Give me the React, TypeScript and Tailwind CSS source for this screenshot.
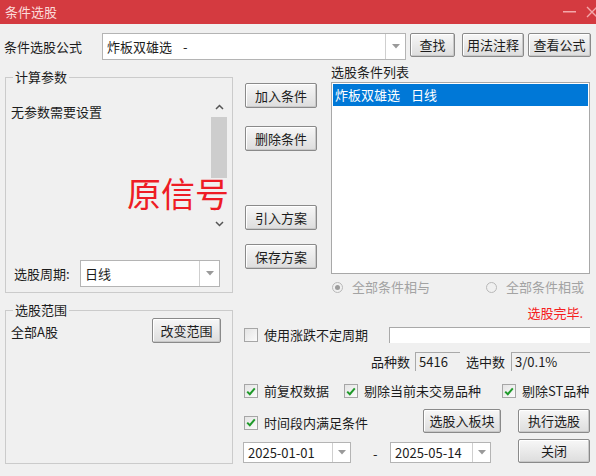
import type { ReactNode } from 'react';

function Btn({ children, className = '' }: { children: ReactNode; className?: string }) {
  return (
    <div
      className={`flex h-[24px] items-center justify-center rounded-[2px] border border-[#8a8a8a] bg-gradient-to-b from-[#f7f7f7] to-[#dddddd] shadow-[inset_-1px_-1px_0_#c8c8c8,inset_1px_1px_0_#ffffff] ${className}`}
    >
      {children}
    </div>
  );
}

function Arrow() {
  return (
    <svg width="8" height="5" viewBox="0 0 8 5">
      <path d="M0 0h8L4 4.5z" fill="#9a9a9a" />
    </svg>
  );
}

function Combo({
  children,
  className = '',
  drop = 'w-[20px]',
}: {
  children: ReactNode;
  className?: string;
  drop?: string;
}) {
  return (
    <div className={`flex border border-[#b4b4b4] bg-white ${className}`}>
      <div className="flex flex-1 items-center pl-[4px]">{children}</div>
      <div className={`flex items-center justify-center border-l border-[#cfcfcf] ${drop}`}>
        <Arrow />
      </div>
    </div>
  );
}

function Check({ checked, label, className = '' }: { checked: boolean; label: string; className?: string }) {
  return (
    <div className={`flex items-center ${className}`}>
      <div className="flex h-[14px] w-[14px] items-center justify-center border border-[#a6a6a6] bg-gradient-to-br from-[#e4e4e4] to-[#fbfbfb]">
        {checked ? (
          <svg width="10" height="9" viewBox="0 0 10 9">
            <path d="M1.2 4.6 3.8 7.2 8.8 1.4" fill="none" stroke="#1f9a2a" strokeWidth="2" />
          </svg>
        ) : null}
      </div>
      <span className="ml-[6px] whitespace-nowrap">{label}</span>
    </div>
  );
}

function Radio({ checked, label, className = '' }: { checked: boolean; label: string; className?: string }) {
  return (
    <div className={`flex items-center text-[#a3a3a3] ${className}`}>
      <div className="flex h-[11px] w-[11px] items-center justify-center rounded-full border border-[#b9b9b9]">
        {checked ? <div className="h-[5px] w-[5px] rounded-full bg-[#9c9c9c]" /> : null}
      </div>
      <span className="ml-[9px]">{label}</span>
    </div>
  );
}

function Group({ title, className = '', children }: { title: string; className?: string; children: ReactNode }) {
  return (
    <div className={`relative border border-[#cbcbcb] ${className}`}>
      <span className="absolute -top-[10px] left-[7px] bg-[#f0f0f0] px-[2px] leading-[18px]">{title}</span>
      {children}
    </div>
  );
}

export default function App() {
  return (
    <div className="h-[476px] w-[596px] overflow-hidden bg-[#f0f0f0] font-['Noto_Sans_CJK_SC',sans-serif] text-[13px] leading-[18px] text-[#1c1c1c]">
      {/* title bar */}
      <div className="flex h-[24px] items-center bg-[#d43a40] pl-[5px] text-[#fbdada]">
        <span>条件选股</span>
        <div className="ml-auto flex items-center">
          <svg width="13" height="2" viewBox="0 0 13 2" className="mr-[10px]">
            <rect width="13" height="1.5" fill="#f3a8aa" />
          </svg>
          <svg width="12" height="12" viewBox="0 0 12 12" className="-mr-[2px]">
            <path d="M1 1l10 10M11 1 1 11" stroke="#f3a8aa" strokeWidth="1.4" />
          </svg>
        </div>
      </div>

      {/* formula row */}
      <div className="mt-[9px] flex items-start pl-[4px]">
        <div className="flex h-[27px] w-[98px] items-center">条件选股公式</div>
        <Combo className="h-[27px] w-[304px]">
          <span>炸板双雄选</span>
          <span className="ml-[11px]">-</span>
        </Combo>
        <Btn className="ml-[4px] w-[45px]">查找</Btn>
        <Btn className="ml-[7px] w-[62px]">用法注释</Btn>
        <Btn className="ml-[4px] w-[63px]">查看公式</Btn>
      </div>

      <div className="flex">
        {/* left column */}
        <div className="ml-[5px] w-[228px]">
          <Group title="计算参数" className="mt-[17px] h-[216px]">
            <div className="flex pt-[20px]">
              <div className="flex-1 pl-[5px] pt-[5px]">无参数需要设置</div>
              <div className="mr-[5px] flex h-[134px] w-[16px] flex-col items-center">
                <div className="flex h-[17px] items-center">
                  <svg width="9" height="6" viewBox="0 0 9 6">
                    <path d="M1 5 4.5 1.5 8 5" fill="none" stroke="#555" strokeWidth="1.5" />
                  </svg>
                </div>
                <div className="mt-[2px] h-[61px] w-[16px] bg-[#cdcdcd]" />
                <div className="mt-auto flex h-[17px] items-center">
                  <svg width="9" height="6" viewBox="0 0 9 6">
                    <path d="M1 1 4.5 4.5 8 1" fill="none" stroke="#555" strokeWidth="1.5" />
                  </svg>
                </div>
              </div>
            </div>
            <span className="absolute left-[121px] top-[97px] whitespace-nowrap text-[34px] leading-[36px] text-[#ee1c25]">
              原信号
            </span>
            <div className="mt-[28px] flex items-center pl-[8px]">
              <span className="w-[66px]">选股周期:</span>
              <Combo className="h-[27px] w-[140px]">日线</Combo>
            </div>
          </Group>

          <Group title="选股范围" className="mt-[17px] h-[154px]">
            <div className="flex items-center justify-between pl-[5px] pr-[11px] pt-[7px]">
              <span className="mt-[2px]">全部A股</span>
              <Btn className="h-[25px] w-[69px]">改变范围</Btn>
            </div>
          </Group>
        </div>

        {/* right column */}
        <div className="ml-[10px] w-[347px]">
          <div className="flex">
            <div className="ml-[2px] flex w-[72px] flex-col">
              <Btn className="mt-[23px] h-[25px]">加入条件</Btn>
              <Btn className="mt-[18px] h-[25px]">删除条件</Btn>
              <Btn className="mt-[54px] h-[25px]">引入方案</Btn>
              <Btn className="mt-[14px] h-[25px]">保存方案</Btn>
            </div>
            <div className="ml-[14px] w-[259px]">
              <div className="mt-[3px]">选股条件列表</div>
              <div className="mt-[1px] h-[192px] border border-[#a8a8a8] bg-white p-[1px]">
                <div className="flex h-[22px] items-center bg-[#0078d7] pl-[2px] text-white">
                  <span>炸板双雄选</span>
                  <span className="ml-[11px]">日线</span>
                </div>
              </div>
              <div className="mt-[5px] flex h-[16px] items-center">
                <Radio checked label="全部条件相与" className="ml-[1px] w-[154px]" />
                <Radio checked={false} label="全部条件相或" />
              </div>
            </div>
          </div>

          <div className="mt-[9px] flex justify-end pr-[7px] text-[#f52020]">选股完毕.</div>

          <div className="mt-[5px] flex h-[16px] items-center">
            <Check checked={false} label="使用涨跌不定周期" className="ml-[1px]" />
            <div className="ml-auto h-[16px] w-[201px] border-l border-t border-[#a9a9a9] bg-white" />
          </div>

          <div className="mt-[9px] flex h-[19px] items-center justify-end">
            <span>品种数</span>
            <div className="ml-[5px] flex h-[19px] w-[45px] items-center border-l border-t border-[#a9a9a9] pl-[3px]">5416</div>
            <span className="ml-[6px]">选中数</span>
            <div className="ml-[6px] flex h-[19px] w-[79px] items-center border-l border-t border-[#a9a9a9] pl-[3px]">3/0.1%</div>
          </div>

          <div className="mt-[12px] flex h-[16px] items-center">
            <Check checked label="前复权数据" className="ml-[1px] w-[100px]" />
            <Check checked label="剔除当前未交易品种" className="w-[158px]" />
            <Check checked label="剔除ST品种" />
          </div>

          <div className="mt-[10px] flex items-center">
            <Check checked label="时间段内满足条件" className="ml-[1px] mt-[3px] flex-1" />
            <Btn className="w-[78px]">选股入板块</Btn>
            <Btn className="ml-[17px] w-[72px]">执行选股</Btn>
          </div>

          <div className="mt-[6px] flex items-end">
            <Combo className="h-[21px] w-[108px]" drop="w-[18px]">2025-01-01</Combo>
            <span className="ml-[22px] w-[17px]">-</span>
            <Combo className="h-[21px] w-[101px]" drop="w-[18px]">2025-05-14</Combo>
            <Btn className="ml-auto w-[72px]">关闭</Btn>
          </div>
        </div>
      </div>
    </div>
  );
}
